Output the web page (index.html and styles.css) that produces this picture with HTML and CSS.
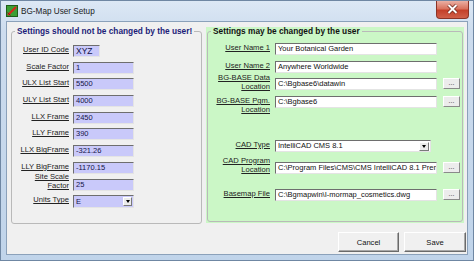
FILE: index.html
```html
<!DOCTYPE html>
<html lang="en">
<head>
  <meta charset="UTF-8">
  <title>BG-Map User Setup</title>
  <link rel="stylesheet" href="styles.css">
</head>
<body>
  <div class="window">
    <div class="titlebar">
      <svg class="app-icon" viewBox="0 0 12 12">
        <rect x="0.5" y="0.5" width="11" height="11" fill="#3c9f34" stroke="#1f5e1a"/>
        <path d="M2 10 L10 2" stroke="#d8261c" stroke-width="2.2"/>
        <path d="M1.5 7.5 L4.5 10.5" stroke="#8a1a12" stroke-width="1"/>
      </svg>
      <span class="title">BG-Map User Setup</span>
      <div class="close-btn">
        <svg viewBox="0 0 33 18" width="33" height="18">
          <path d="M12.5 5 L20.5 13 M20.5 5 L12.5 13" stroke="#6a2016" stroke-width="3.4"/>
          <path d="M12.5 5 L20.5 13 M20.5 5 L12.5 13" stroke="#ffffff" stroke-width="2"/>
        </svg>
      </div>
    </div>

    <div class="client">
      <div class="groups">
        <fieldset class="group group-fixed">
          <legend>Settings should not be changed by the user!</legend>
          <div class="fields">
            <div class="row"><span class="lbl">User ID Code</span><span class="field field-short">XYZ</span></div>
            <div class="row"><span class="lbl">Scale Factor</span><span class="field">1</span></div>
            <div class="row"><span class="lbl">ULX List Start</span><span class="field">5500</span></div>
            <div class="row"><span class="lbl">ULY List Start</span><span class="field">4000</span></div>
            <div class="row"><span class="lbl">LLX Frame</span><span class="field">2450</span></div>
            <div class="row"><span class="lbl">LLY Frame</span><span class="field">390</span></div>
            <div class="row"><span class="lbl">LLX BigFrame</span><span class="field">-321.26</span></div>
            <div class="row"><span class="lbl">LLY BigFrame</span><span class="field">-1170.15</span></div>
            <div class="row"><span class="lbl lbl-two">Site Scale<br>Factor</span><span class="field">25</span></div>
            <div class="row row-select"><span class="lbl">Units Type</span><span class="field select"><span class="select-text">E</span><span class="arrow"></span></span></div>
          </div>
        </fieldset>

        <div class="green">
          <fieldset class="group group-user">
            <legend>Settings may be changed by the user</legend>
            <div class="fields">
              <div class="row"><span class="lbl">User Name 1</span><span class="field">Your Botanical Garden</span></div>
              <div class="row"><span class="lbl">User Name 2</span><span class="field">Anywhere Worldwide</span></div>
              <div class="row row-tight"><span class="lbl lbl-up">BG-BASE Data<br>Location</span><span class="field">C:\Bgbase6\datawin</span><span class="browse">...</span></div>
              <div class="row"><span class="lbl">BG-BASE Pgm.<br>Location</span><span class="field">C:\Bgbase6</span><span class="browse">...</span></div>
              <div class="row row-cad"><span class="lbl">CAD Type</span><span class="field select select-cad"><span class="select-text">IntelliCAD CMS 8.1</span><span class="arrow"></span></span></div>
              <div class="row row-prog"><span class="lbl lbl-up2">CAD Program<br>Location</span><span class="field">C:\Program Files\CMS\CMS IntelliCAD 8.1 Prem</span><span class="browse">...</span></div>
              <div class="row row-base"><span class="lbl">Basemap File</span><span class="field">C:\Bgmapwin\I-mormap_cosmetics.dwg</span><span class="browse">...</span></div>
            </div>
          </fieldset>
        </div>
      </div>

      <div class="actions">
        <button class="btn btn-cancel">Cancel</button>
        <button class="btn btn-save">Save</button>
      </div>
    </div>
  </div>
</body>
</html>
```

FILE: styles.css
```css
* {
  box-sizing: border-box;
}

body {
  margin: 0;
  font-family: "Liberation Sans", Arial, sans-serif;
  color: #1a1a1a;
}

.window {
  width: 474px;
  height: 261px;
  border: 1px solid #6f87a3;
  background: linear-gradient(180deg, #dce8f5 0%, #cddcee 12%, #c0d4ea 100%);
  display: flex;
  flex-direction: column;
}

/* title bar */
.titlebar {
  height: 20px;
  display: flex;
  align-items: flex-start;
  flex: none;
}

.app-icon {
  width: 12px;
  height: 12px;
  margin: 4px 0 0 5px;
}

.title {
  margin: 5px 0 0 3px;
  font-size: 8.2px;
  line-height: 11px;
  color: #1b1b1b;
}

.close-btn {
  margin-left: auto;
  margin-right: 4px;
  width: 33px;
  height: 18px;
  border: 1px solid #8b3326;
  border-top: none;
  border-radius: 0 0 4px 4px;
  background: linear-gradient(180deg, #eab0a4 0%, #d9735f 45%, #c4402a 55%, #d0604a 100%);
  overflow: hidden;
}

.close-btn svg {
  display: block;
  margin: -1px 0 0 -1px;
}

/* client area */
.client {
  height: 234px;
  margin: 0 5px;
  border: 1px solid #8ba1ba;
  background: #f0f0f0;
  display: flex;
  flex-direction: column;
  flex: none;
}

.groups {
  display: flex;
  gap: 4px;
  padding: 5px 0 0 4px;
}

fieldset.group {
  margin: 0;
  padding: 0;
  min-width: 0;
  border: 1px solid #b9b9b9;
  border-radius: 3px;
}

.group legend {
  margin-left: 3px;
  padding: 0 2px;
  font-size: 8.3px;
  line-height: 9px;
  font-weight: bold;
  white-space: nowrap;
}

.group-fixed {
  width: 191px;
  height: 197px;
}

.group-fixed legend {
  color: #1c1c78;
}

.green {
  width: 258px;
  height: 196px;
  padding: 0 1px 1px;
  background: #cbf7c6;
}

.group-user {
  width: 256px;
  height: 195px;
  border-color: #abc3a8;
}

.group-user legend {
  color: #111;
}

.fields {
  display: flex;
  flex-direction: column;
}

.group-fixed .fields {
  gap: 4.7px;
  padding-top: 9px;
}

.group-user .fields {
  padding-top: 7px;
}

.row {
  display: flex;
  align-items: flex-start;
  height: 12px;
}

.lbl {
  flex: none;
  text-align: right;
  font-size: 7.6px;
  line-height: 9px;
  text-decoration: underline;
  white-space: nowrap;
  color: #222;
}

.group-fixed .lbl {
  width: 57px;
  margin-right: 4px;
}

.group-user .lbl {
  width: 62px;
  margin-right: 5px;
}

.lbl-two {
  margin-top: -6.5px;
}

.lbl-up {
  margin-top: -5.5px;
}

.lbl-up2 {
  margin-top: -6.5px;
}

.field {
  flex: none;
  height: 12px;
  padding-left: 2px;
  border-top: 1px solid #6e6e6e;
  border-left: 1px solid #6e6e6e;
  border-right: 1px solid #e4e4e4;
  border-bottom: 1px solid #e4e4e4;
  font-size: 7.5px;
  line-height: 10px;
  white-space: nowrap;
  overflow: hidden;
  background: #fff;
  color: #111;
}

.group-fixed .field {
  width: 61px;
  background: #c9c9fa;
  color: #14144a;
}

.group-fixed .field-short {
  width: 27px;
  font-size: 8.5px;
}

.group-user .field {
  width: 162px;
}

/* dropdowns */
.select {
  display: flex;
  align-items: center;
  padding-right: 1px;
}

.select-text {
  flex: 1;
  overflow: hidden;
}

.arrow {
  flex: none;
  width: 9px;
  height: 9px;
  background: #ececec;
  border-top: 1px solid #fff;
  border-left: 1px solid #fff;
  border-right: 1px solid #7a7a7a;
  border-bottom: 1px solid #7a7a7a;
  display: flex;
  align-items: center;
  justify-content: center;
}

.arrow::after {
  content: "";
  border-left: 2.5px solid transparent;
  border-right: 2.5px solid transparent;
  border-top: 3px solid #000;
}

.row-select {
  height: 13px;
}

.row-select .field {
  height: 13px;
}

.group-user .select-cad {
  width: 156px;
}

.select-cad .arrow {
  width: 10px;
}

/* right side rows sit at uneven distances */
.group-user .row {
  margin-top: 6px;
}

.group-user .row:first-child {
  margin-top: 0;
}

.group-user .row.row-tight {
  margin-top: 5px;
}

.group-user .row.row-cad {
  margin-top: 32px;
}

.group-user .row.row-prog {
  margin-top: 10px;
}

.group-user .row.row-base {
  margin-top: 15px;
}

.browse {
  flex: none;
  width: 17px;
  height: 11px;
  margin-left: 6px;
  background: #ececec;
  border-top: 1px solid #fff;
  border-left: 1px solid #fff;
  border-right: 1px solid #8a8a8a;
  border-bottom: 1px solid #8a8a8a;
  font-size: 7px;
  line-height: 7px;
  text-align: center;
  color: #333;
}

/* buttons */
.actions {
  display: flex;
  justify-content: flex-end;
  gap: 5px;
  margin-top: 8px;
  padding-right: 1px;
}

.btn {
  height: 20px;
  padding: 0;
  font-family: "Liberation Sans", Arial, sans-serif;
  font-size: 7.6px;
  color: #111;
  background: #f0f0f0;
  border-top: 1px solid #fff;
  border-left: 1px solid #fff;
  border-right: 1px solid #6a6a6a;
  border-bottom: 1px solid #6a6a6a;
  box-shadow: inset -1px -1px 0 #a8a8a8;
}

.btn-cancel {
  width: 61px;
}

.btn-save {
  width: 62px;
}
```
